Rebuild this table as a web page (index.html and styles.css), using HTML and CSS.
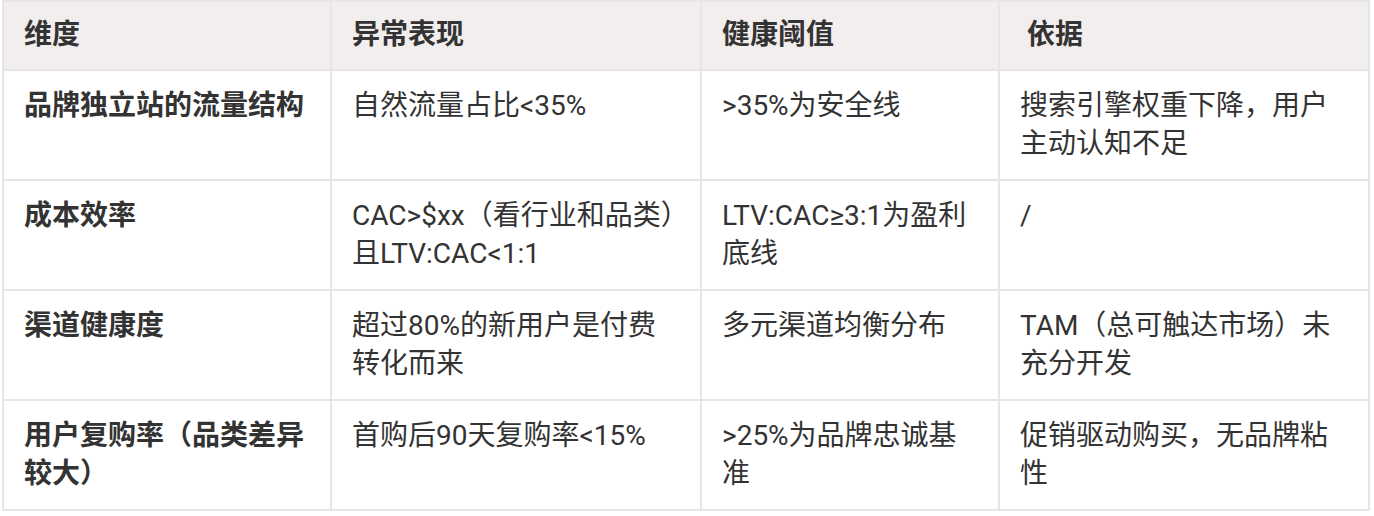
FILE: index.html
```html
<!DOCTYPE html>
<html lang="zh-CN">
<head>
<meta charset="utf-8">
<title>表格</title>
<link rel="stylesheet" href="styles.css">
</head>
<body>
<table class="grid">
  <colgroup>
    <col class="c1"><col class="c2"><col class="c3"><col class="c4">
  </colgroup>
  <thead>
    <tr>
      <th>维度</th>
      <th>异常表现</th>
      <th>健康阈值</th>
      <th>&nbsp;依据</th>
    </tr>
  </thead>
  <tbody>
    <tr>
      <td class="key">品牌独立站的流量结构</td>
      <td>自然流量占比&lt;35%</td>
      <td>&gt;35%为安全线</td>
      <td>搜索引擎权重下降，用户主动认知不足</td>
    </tr>
    <tr>
      <td class="key">成本效率</td>
      <td>CAC&gt;$xx（看行业和品类）且LTV:CAC&lt;1:1</td>
      <td>LTV:CAC≥3:1为盈利底线</td>
      <td>/</td>
    </tr>
    <tr>
      <td class="key">渠道健康度</td>
      <td>超过80%的新用户是付费转化而来</td>
      <td>多元渠道均衡分布</td>
      <td>TAM（总可触达市场）未充分开发</td>
    </tr>
    <tr>
      <td class="key">用户复购率（品类差异较大）</td>
      <td>首购后90天复购率&lt;15%</td>
      <td>&gt;25%为品牌忠诚基准</td>
      <td>促销驱动购买，无品牌粘性</td>
    </tr>
  </tbody>
</table>
</body>
</html>
```

FILE: styles.css
```css
html, body {
  margin: 0;
  padding: 0;
  background: #ffffff;
}

body {
  font-family: Roboto, "Noto Sans CJK SC", sans-serif;
  font-size: 28px;
  line-height: 38px;
  color: #333333;
}

.grid {
  margin-left: 2px;
  border-collapse: separate;
  border-spacing: 0;
  table-layout: fixed;
  width: 1368px;
  border-top: 2px solid #e6e6e6;
  border-left: 2px solid #e6e6e6;
}

.c1 { width: 328px; }
.c2 { width: 370px; }
.c3 { width: 298px; }
.c4 { width: 370px; }

.grid th,
.grid td {
  border-right: 2px solid #e6e6e6;
  border-bottom: 2px solid #e6e6e6;
  text-align: left;
  vertical-align: top;
  padding: 16px 20px;
}

.grid th {
  background: #f3eeee;
  font-weight: 700;
  padding-top: 14px;
  padding-bottom: 15px;
}

.grid td.key {
  font-weight: 700;
}
```
